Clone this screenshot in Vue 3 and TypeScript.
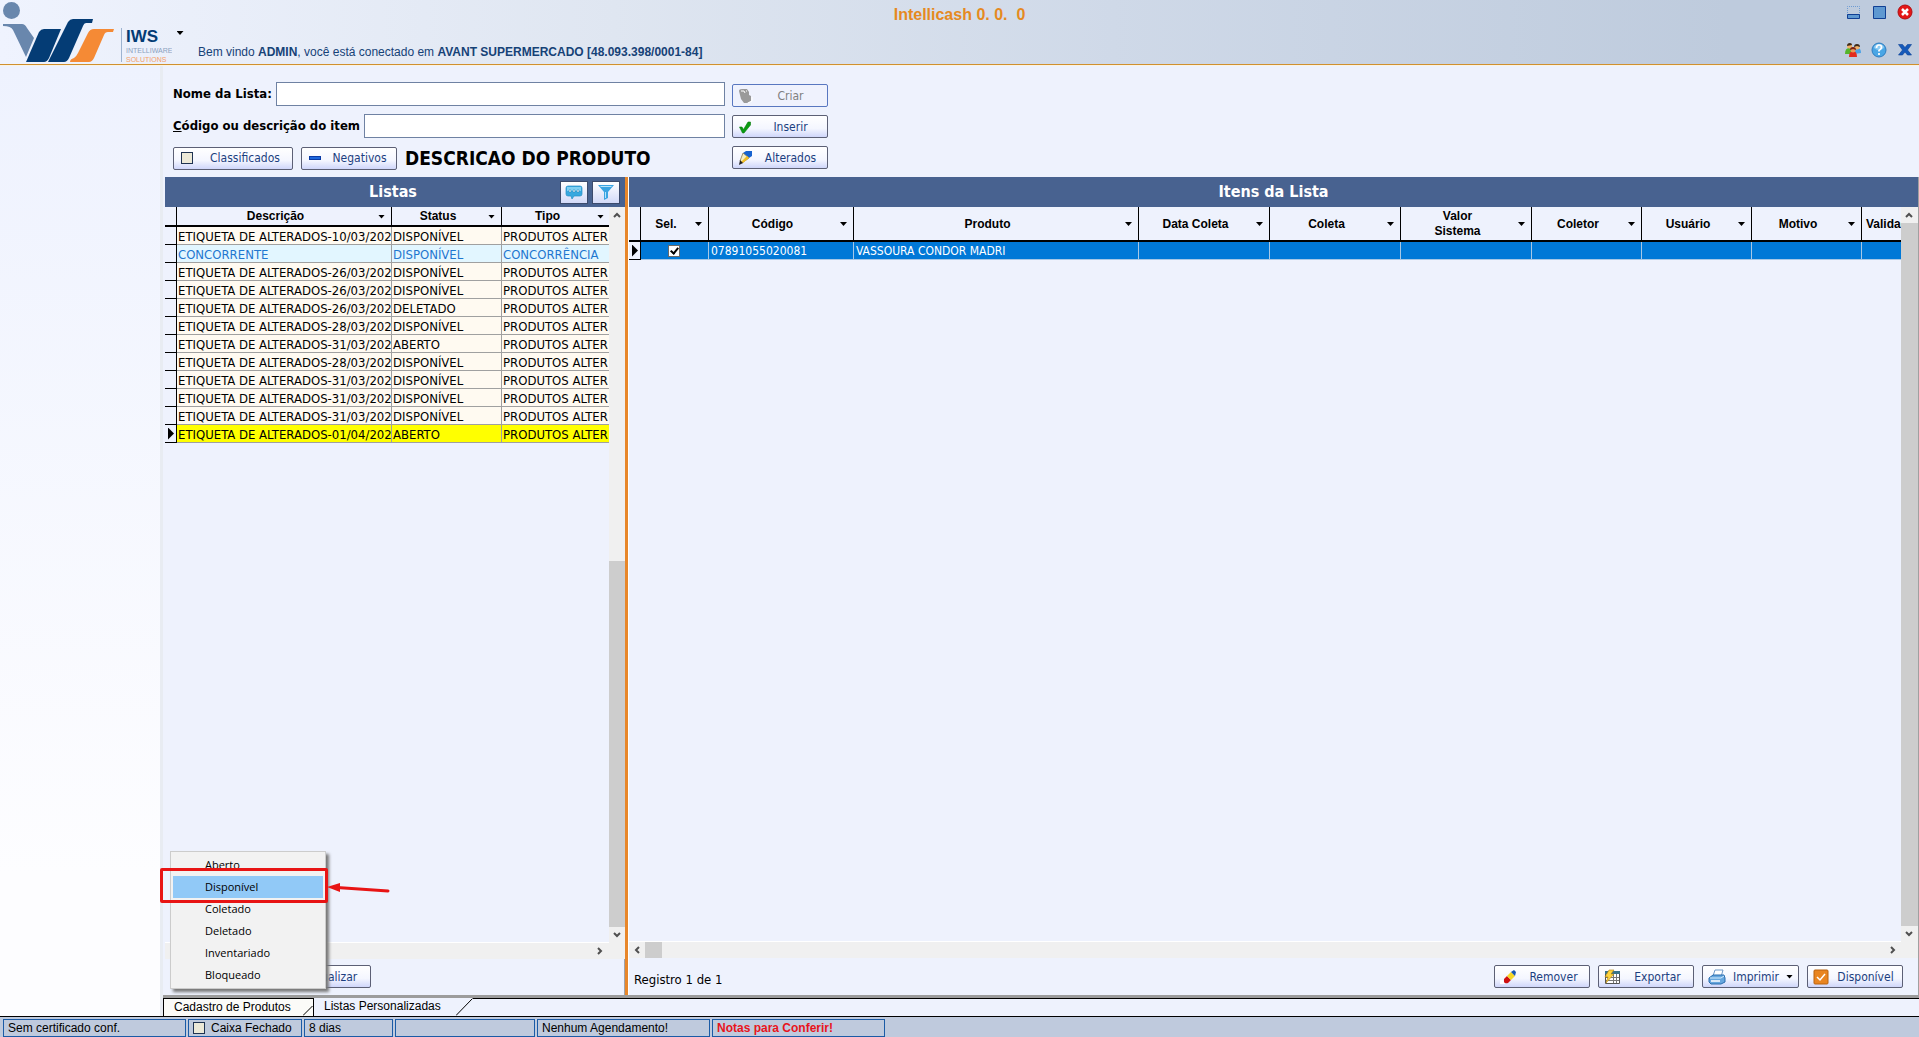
<script setup lang="ts">
import { ref } from 'vue'

interface ListRow {
  description: string
  status: string
  type: string
  tone?: 'rival' | 'current'
}

const altered = (date: string, status: string, tone?: ListRow['tone']): ListRow => ({
  description: `ETIQUETA DE ALTERADOS-${date}/202`,
  status,
  type: 'PRODUTOS ALTER',
  tone,
})

const lists: ListRow[] = [
  altered('10/03', 'DISPONÍVEL'),
  { description: 'CONCORRENTE', status: 'DISPONÍVEL', type: 'CONCORRÊNCIA', tone: 'rival' },
  altered('26/03', 'DISPONÍVEL'),
  altered('26/03', 'DISPONÍVEL'),
  altered('26/03', 'DELETADO'),
  altered('28/03', 'DISPONÍVEL'),
  altered('31/03', 'ABERTO'),
  altered('28/03', 'DISPONÍVEL'),
  altered('31/03', 'DISPONÍVEL'),
  altered('31/03', 'DISPONÍVEL'),
  altered('31/03', 'DISPONÍVEL'),
  altered('01/04', 'ABERTO', 'current'),
]

const itemColumns = [
  { label: 'Sel.', width: 68 },
  { label: 'Código', width: 145 },
  { label: 'Produto', width: 285 },
  { label: 'Data Coleta', width: 131 },
  { label: 'Coleta', width: 131 },
  { label: 'Valor Sistema', width: 131 },
  { label: 'Coletor', width: 110 },
  { label: 'Usuário', width: 110 },
  { label: 'Motivo', width: 110 },
  { label: 'Validade', width: 80 },
]

const statusOptions = ['Aberto', 'Disponível', 'Coletado', 'Deletado', 'Inventariado', 'Bloqueado']
const activeStatus = ref('Disponível')
const listName = ref('')
const itemQuery = ref('')
const selected = ref(true)
</script>

<template>
  <div class="app">
    <header class="topbar">
      <div class="brand">
        <svg class="logo" width="172" height="64" viewBox="0 0 172 64" role="img" aria-label="IWS Intelliware Solutions">
          <circle cx="11.500" cy="10.500" r="8.500" fill="#6987ad" />
          <path d="M3 24h19q3 0 5 4l7 10-8 19-13-27q-2-4-10-4z" fill="#6987ad" />
          <path d="M26 62 39 32q2-3 5-3h17L49 58q-2 4-5 4z" fill="#043c75" />
          <path d="M48 62 68 22q2-3 5-3h20l-1 4h-6q-2 0-3 3L69 58q-2 4-5 4z" fill="#043c75" />
          <path d="M70 62q0-3 4-4 2-1 4-5l10-20q2-4 6-4h20l-1 3h-5q-3 0-4 3L94 58q-2 4-5 4z" fill="#f58a35" />
          <path d="M121.500 28v34" stroke="#9db3d0" />
          <text x="126" y="42" font-size="17" font-weight="700" fill="#043c75">IWS</text>
          <text x="126" y="53" font-size="7" fill="#8ba1bf">INTELLIWARE</text>
          <text x="126" y="62" font-size="7" fill="#f3a06a">SOLUTIONS</text>
        </svg>
        <button class="plain logo-menu" type="button" aria-label="Menu"><span class="caret"></span></button>
        <p class="welcome">Bem vindo <b>ADMIN</b>, você está conectado em <b>AVANT SUPERMERCADO [48.093.398/0001-84]</b></p>
      </div>
      <h1>Intellicash 0. 0.&nbsp; 0</h1>
      <nav class="window-tools">
        <button class="plain" type="button" aria-label="Minimizar">
          <svg width="16" height="16" viewBox="0 0 16 16"><path d="M2.500 11V2.500h12V11" fill="none" stroke="#6d9bd3" stroke-dasharray="1 1" /><path d="M2.500 10.500h12v4h-12z" fill="#5e98d1" stroke="#103f94" /></svg>
        </button>
        <button class="plain" type="button" aria-label="Maximizar">
          <svg width="16" height="16" viewBox="0 0 16 16"><path d="M2.500 2.500h12v12h-12z" fill="#5e98d1" stroke="#103f94" /></svg>
        </button>
        <button class="plain" type="button" aria-label="Fechar">
          <svg width="16" height="16" viewBox="0 0 16 16"><circle cx="8" cy="8" r="7" fill="#e51616" stroke="#b00d10" /><path d="m5 5 6 6m0-6-6 6" stroke="#fff" stroke-width="2.500" /></svg>
        </button>
        <button class="plain" type="button" aria-label="Usuários">
          <svg width="18" height="16" viewBox="0 0 18 16"><path d="M1 12q0-6 4-6t4 6z" fill="#55b52b" /><path d="M10 12q0-6 3.500-6t3.500 5z" fill="#4ca2e5" /><circle cx="5.500" cy="4" r="2.500" fill="#f2b268" /><circle cx="13" cy="5" r="2.500" fill="#f2b268" /><path d="M3 4q0-3 3-3 2 0 2 2zM10 5q0-3 3-3 3 0 3 3l-3-1z" fill="#3c2a1b" /><path d="M5 15q0-6 4-6t4 6z" fill="#e22c1e" /><circle cx="9" cy="8" r="2.500" fill="#e99b58" /><path d="M6 8q0-3 3-3t3 3L9 7z" fill="#7b2011" /></svg>
        </button>
        <button class="plain" type="button" aria-label="Ajuda">
          <svg width="16" height="16" viewBox="0 0 16 16"><circle cx="8" cy="8" r="7" fill="#4aa6e5" stroke="#2e7dc0" /><ellipse cx="8" cy="5" rx="5" ry="3" fill="#8ccbf2" /><path d="M5.500 6q0-3 2.500-3t2.500 2.300Q10.500 7 8 8.500v1M8 11v2" fill="none" stroke="#fff" stroke-width="1.700" /></svg>
        </button>
        <button class="plain" type="button" aria-label="Sair">
          <svg width="16" height="16" viewBox="0 0 16 16"><path d="M1.500 2.500h4L8 5.500l2.500-3h4L10.500 8l4 5h-4L8 10l-2.500 3h-4l4-5z" fill="#1559ba" stroke="#0c4296" stroke-width=".6" /></svg>
        </button>
      </nav>
    </header>

    <div class="body">
      <aside class="sidebar"></aside>
      <main class="main">
        <form class="query" @submit.prevent>
          <div class="fields">
            <div class="row">
              <label for="list-name">Nome da Lista:</label>
              <input id="list-name" v-model="listName" type="text" />
            </div>
            <div class="row">
              <label for="item-query"><u>C</u>ódigo ou descrição do item</label>
              <input id="item-query" v-model="itemQuery" type="text" />
            </div>
            <div class="row buttons">
              <button class="btn wide" type="button"><i class="box"></i><span>Classificados</span></button>
              <button class="btn" type="button"><i class="dash"></i><span>Negativos</span></button>
              <strong class="product">DESCRICAO DO PRODUTO</strong>
            </div>
          </div>
          <div class="actions">
            <button class="btn" type="button" disabled>
              <svg width="16" height="16" viewBox="0 0 16 16"><path d="M1 3q0-2 3-2h5l2 3v3l2 1v5l-4 2H6L3 11z" fill="#9a9a9a" /><path d="M3 3h3l1 2M8 3h1" fill="none" stroke="#fff" /><path d="m10 15 4-2V9" fill="none" stroke="#fff" /></svg>
              <span>Criar</span>
            </button>
            <button class="btn" type="button">
              <svg width="16" height="16" viewBox="0 0 16 16"><path d="M1.500 8h2.500l1.500 2.500L10 3h2.500v3L6 14H4.500z" fill="#0a9b12" stroke="#087a0e" stroke-width=".6" /></svg>
              <span>Inserir</span>
            </button>
            <button class="btn" type="button">
              <svg width="16" height="16" viewBox="0 0 16 16"><path d="M5 3 8 1h6v5l-3 2z" fill="#1763d0" /><path d="m5 3 6 5-7 5-2-2z" fill="#f8efc0" stroke="#756a42" stroke-width=".7" /><path d="m9 6 2 2-6 5-2-1z" fill="#f0bd25" /><path d="m2 10 3 3-4 2z" fill="#222" /></svg>
              <span>Alterados</span>
            </button>
          </div>
        </form>

        <div class="panels">
          <section class="panel lists">
            <div class="title">
              <h2>Listas</h2>
              <button class="tool" type="button" aria-label="Comentários">
                <svg width="18" height="16" viewBox="0 0 18 16"><path d="M3 2h12q2 0 2 2v6q0 2-2 2H9l-2 3-1-3H3q-2 0-2-2V4q0-2 2-2z" fill="#38a8df" stroke="#278fc6" stroke-width=".7" /><path d="M2 3h14v4H2z" fill="#7fd0f3" /><path d="M4 6h2v2H4zm4 0h2v2H8zm4 0h2v2h-2z" fill="#fff" stroke="#2b7cae" stroke-width=".5" /></svg>
              </button>
              <button class="tool" type="button" aria-label="Filtrar">
                <svg width="18" height="16" viewBox="0 0 18 16"><path d="M1 1h16l-6 7v6l-4 2V8z" fill="#3aa4e2" /><path d="M3 2h12l-1 1H4zm5 6h1v6H8z" fill="#b6e3fa" /></svg>
              </button>
            </div>
            <div class="viewport">
              <div class="grid">
                <table class="list-table">
                  <colgroup><col class="mark" /><col class="c-desc" /><col class="c-status" /><col class="c-type" /></colgroup>
                  <thead>
                    <tr>
                      <th></th>
                      <th v-for="name in ['Descrição', 'Status', 'Tipo']" :key="name"><div class="head"><span>{{ name }}</span><i class="caret"></i></div></th>
                    </tr>
                  </thead>
                  <tbody>
                    <tr v-for="(row, i) in lists" :key="i" :class="row.tone">
                      <td class="marker"><i v-if="row.tone === 'current'" class="pointer"></i></td>
                      <td>{{ row.description }}</td>
                      <td>{{ row.status }}</td>
                      <td>{{ row.type }}</td>
                    </tr>
                  </tbody>
                </table>
              </div>
              <div class="vbar">
                <svg width="16" height="16" viewBox="0 0 16 16"><path d="m5 10 3-3 3 3" /></svg>
                <div class="track"><div class="gap"></div><div class="thumb"></div></div>
                <svg width="16" height="16" viewBox="0 0 16 16"><path d="m5 6 3 3 3-3" /></svg>
              </div>
            </div>
            <div class="hbar left-hbar">
              <svg width="16" height="16" viewBox="0 0 16 16"><path d="m6 5 3 3-3 3" /></svg>
            </div>
            <div class="foot">
              <div class="menu-anchor">
                <button class="btn" type="button">
                  <svg width="16" height="16" viewBox="0 0 16 16"><path d="M13 6a5 5 0 1 0 0 4M13 2v4H9" fill="none" stroke="#1b8a35" stroke-width="2" /></svg>
                  <span>Atualizar</span>
                </button>
                <ul class="menu" role="menu">
                  <li v-for="option in statusOptions" :key="option" role="none">
                    <button type="button" role="menuitem" :class="{ active: option === activeStatus }" @click="activeStatus = option">{{ option }}</button>
                  </li>
                </ul>
                <div class="callout"></div>
                <svg class="arrow" width="64" height="16" viewBox="0 0 64 16"><path d="M10 7.500 61 11" stroke="#e81414" stroke-width="3" stroke-linecap="round" /><path d="M0 7 13 3v9z" fill="#e81414" /></svg>
              </div>
            </div>
          </section>
          <div class="splitter"></div>
          <section class="panel items">
            <div class="title"><h2>Itens da Lista</h2></div>
            <div class="viewport">
              <div class="grid">
                <table class="item-table">
                  <colgroup><col class="mark" /><col v-for="c in itemColumns" :key="c.label" :style="{ width: c.width + 'px' }" /></colgroup>
                  <thead>
                    <tr>
                      <th></th>
                      <th v-for="c in itemColumns" :key="c.label"><div class="head" :class="{ narrow: c.label === 'Valor Sistema' }"><span>{{ c.label }}</span><i class="caret"></i></div></th>
                    </tr>
                  </thead>
                  <tbody>
                    <tr>
                      <td class="marker"><i class="pointer"></i></td>
                      <td class="check"><input v-model="selected" type="checkbox" aria-label="Selecionar VASSOURA CONDOR MADRI" /></td>
                      <td>07891055020081</td>
                      <td>VASSOURA CONDOR MADRI</td>
                      <td v-for="n in 7" :key="n"></td>
                    </tr>
                  </tbody>
                </table>
              </div>
              <div class="vbar">
                <svg width="16" height="16" viewBox="0 0 16 16"><path d="m5 10 3-3 3 3" /></svg>
                <div class="track"><div class="thumb"></div></div>
                <svg width="16" height="16" viewBox="0 0 16 16"><path d="m5 6 3 3 3-3" /></svg>
              </div>
            </div>
            <div class="hbar">
              <svg width="16" height="16" viewBox="0 0 16 16"><path d="m10 5-3 3 3 3" /></svg>
              <div class="thumb"></div>
              <svg class="end" width="16" height="16" viewBox="0 0 16 16"><path d="m6 5 3 3-3 3" /></svg>
            </div>
            <div class="foot item-foot">
              <p>Registro 1 de 1</p>
              <button class="btn" type="button">
                <svg width="18" height="16" viewBox="0 0 18 16"><path d="M0 11h3l2 4H0z" fill="#fff" /><path d="m4 10 3-3 4 4-3 3q-3 1-4-1z" fill="#cf1010" /><path d="m7 7 4-4 4 4-4 4z" fill="#f7d828" /><path d="m11 3 3-2 2 2-1 4z" fill="#1557b5" /></svg>
                <span>Remover</span>
              </button>
              <button class="btn" type="button">
                <svg width="18" height="16" viewBox="0 0 18 16"><path d="M1.500 2.500h14v12h-14z" fill="#fff" stroke="#555" /><path d="M1 2h15v3H1z" fill="#39738a" /><path d="M2 8.500h13M2 11.500h13M9.500 5v9M12.500 5v9" stroke="#777" /><path d="M5 1h5L7 5h3l-8 9 2-6H1z" fill="#ffd43b" stroke="#a97d10" stroke-width=".6" /></svg>
                <span>Exportar</span>
              </button>
              <button class="btn tight" type="button">
                <svg width="18" height="16" viewBox="0 0 18 16"><path d="m5 7 2-6h8l-2 7z" fill="#fff" stroke="#6e98c7" /><path d="m1 9 4-3h11l1 3v4l-4 2H3l-2-2z" fill="#67a7de" stroke="#286cae" /><path d="M2 9h11l3-2" fill="none" stroke="#d5edff" /><path d="M3 12h9" stroke="#fff" stroke-width="1.500" /></svg>
                <span>Imprimir</span><i class="caret"></i>
              </button>
              <button class="btn" type="button">
                <svg width="16" height="16" viewBox="0 0 16 16"><rect x="1" y="1" width="14" height="14" rx="1" fill="#e98520" stroke="#b9620f" /><path d="m4 8 3 3 5-6" fill="none" stroke="#fff" stroke-width="1.500" /></svg>
                <span>Disponível</span>
              </button>
            </div>
          </section>
        </div>

        <nav class="tabs">
          <a class="tab inactive" href="#produtos">Cadastro de Produtos<svg width="10" height="17" viewBox="0 0 10 17"><path d="M0 16.500 9.500 7" fill="none" stroke="#000" /></svg></a>
          <a class="tab active-tab" href="#listas">Listas Personalizadas<svg width="17" height="18" viewBox="0 0 17 18"><path d="M0 17.500 16.500 .5" stroke="#000" /></svg></a>
          <div class="rest"></div>
        </nav>
      </main>
    </div>

    <footer class="statusbar">
      <span class="s-cert">Sem certificado conf.</span>
      <span class="s-cash"><i class="box"></i>Caixa Fechado</span>
      <span class="s-days">8 dias</span>
      <span class="s-blank"></span>
      <span class="s-note">Nenhum Agendamento!</span>
      <span class="s-note alert">Notas para Conferir!</span>
    </footer>
  </div>
</template>

<style>
body { margin: 0; }
</style>

<style scoped>
* { box-sizing: border-box; }
.app {
  --ui: "DejaVu Sans Condensed", "DejaVu Sans", sans-serif;
  --arial: "Liberation Sans", Arial, sans-serif;
  display: flex; flex-direction: column; height: 100vh; overflow: hidden;
  font: 12px/16px var(--ui); color: #000; background: #eef2fd;
}
h1, h2, p, ul { margin: 0; padding: 0; list-style: none; }
button { font: inherit; color: inherit; }
svg { flex: none; display: block; }
.plain { display: flex; align-items: center; justify-content: center; padding: 0; border: 0; background: none; }
.caret { flex: none; width: 7px; height: 4px; background: #000; clip-path: polygon(0 0, 100% 0, 50% 100%); }

.topbar {
  flex: none; display: grid; grid-template-columns: 1fr auto 1fr; height: 66px;
  border-bottom: 1px solid #faf3e3; box-shadow: inset 0 -1px #d0902f;
  background: linear-gradient(90deg, #eff3fe 0, #dfe6f1 32%, #cfd9e8 58%, #becbdd 90%);
  font-family: var(--arial);
}
.brand { display: flex; min-width: 0; }
.logo { font-family: "Liberation Sans Narrow", var(--arial); }
.logo-menu { width: 16px; height: 66px; }
.welcome { align-self: flex-end; padding: 0 0 6px 10px; color: #164277; white-space: nowrap; }
h1 { padding-top: 5px; font-size: 16px; line-height: 20px; color: #e58a1f; white-space: nowrap; }
.window-tools { justify-self: end; display: grid; grid-template-columns: repeat(3, 18px); gap: 0 8px; padding: 4px 5px 8px 0; align-content: space-between; }

.body { flex: 1; display: flex; min-height: 0; }
.sidebar { flex: 0 0 163px; border-right: 3px solid #e8ecf2; background: linear-gradient(#eef2fe, #fdfdff 85%); }
.main { flex: 1; min-width: 0; display: flex; flex-direction: column; }
.query { flex: none; display: flex; gap: 7px; padding: 16px 0 7px 10px; }
.fields { display: flex; flex-direction: column; gap: 8px; width: 552px; }
.row { display: flex; align-items: center; gap: 4px; height: 24px; }
.row.buttons { gap: 8px; }
.row label { font-size: 13px; font-weight: 700; white-space: nowrap; }
.row input { flex: 1; min-width: 0; height: 24px; border: 1px solid #6f82a3; background: #fff; font: inherit; }
.product { font-size: 19px; line-height: 24px; white-space: nowrap; }
.actions { display: flex; flex-direction: column; gap: 8px; padding-top: 2px; }
.btn {
  flex: none; display: flex; align-items: center; width: 96px; height: 23px; padding: 0 5px;
  border: 1px solid #5c6075; border-radius: 2px; color: #1c3f80; white-space: nowrap;
  background: linear-gradient(#fff, #f4f6ff 60%, #cfd6fa);
}
.btn span { flex: 1; padding-left: 5px; text-align: center; }
.btn:disabled { border-color: #5877c0; background: #eff2fd; color: #808080; }
.btn.wide { width: 120px; }
.btn.wide span { padding-left: 8px; }
.btn.tight { width: 97px; }
.btn.tight span { padding-left: 0; }
.box { flex: none; width: 12px; height: 12px; margin: 0 2px; border: 1px solid #1f3352; background: #ece9d8; }
.dash { width: 12px; height: 4px; margin: 0 2px; border: 1px solid #0a3ba5; background: #1c66dc; }

.panels { flex: 1; display: flex; min-height: 0; padding-left: 2px; border-bottom: 3px solid #9c9c9c; }
.panel { display: flex; flex-direction: column; min-width: 0; }
.lists { flex: 0 0 460px; }
.items { flex: 1; border-right: 1px solid #a0a0a0; }
.splitter { flex: 0 0 4px; border-right: 1px solid #fff; background: #e8872a; }
.title { flex: none; display: flex; align-items: center; gap: 4px; height: 30px; background: #486290; color: #fff; }
.title h2 { flex: 1; font-size: 16px; line-height: 20px; text-align: center; }
.lists .title { padding: 0 5px 0 65px; }
.tool { display: flex; align-items: center; justify-content: center; width: 28px; height: 23px; padding: 0; border: 1px solid #3c4b6c; background: linear-gradient(#fff, #d3daf8); }
.viewport { flex: 1; display: flex; min-height: 0; }
.grid { flex: 1; min-width: 0; overflow: hidden; border-bottom: 1px solid #fff; }
table { table-layout: fixed; border-collapse: separate; border-spacing: 0; }
.list-table { width: 480px; font-size: 13px; }
.item-table { width: 1313px; }
.mark { width: 12px; }
.c-desc { width: 215px; }
.c-status { width: 110px; }
.c-type { width: 143px; }
th { height: 20px; padding: 1px 0 0; border-right: 1px solid #000; border-bottom: 2px solid #000; font: 700 12px/15px var(--arial); }
.item-table th { height: 35px; }
.head { display: flex; align-items: center; padding-right: 6px; }
.head span { flex: 1; padding-right: 4px; text-align: center; }
.list-table th:nth-child(4) .head { padding-right: 40px; }
.item-table th:last-child .head span { text-align: left; padding-left: 4px; }
.head.narrow span { padding: 0 36px 0 32px; }
td { height: 18px; padding: 2px 0 0 2px; border-right: 1px solid #a0a0a0; border-bottom: 1px solid #a0a0a0; line-height: 15px; white-space: nowrap; overflow: hidden; background: #fffaf1; }
.list-table td { padding-left: 1px; }
.list-table td.marker, .item-table td.marker { padding: 0; border-color: #000; background: #eef2fd; }
.pointer { display: block; width: 6px; height: 12px; margin-left: 3px; background: #000; clip-path: polygon(0 0, 100% 50%, 0 100%); }
.rival td:not(.marker) { background: #e2f6ff; color: #1f77cf; }
.current td:not(.marker) { background: #ff0; }
.item-table td:not(.marker) { background: #0078d7; color: #fff; border-color: #a7c7e6; }
.item-table td.check { padding: 0; }
.check input { appearance: none; display: block; position: relative; width: 12px; height: 12px; margin: 0 0 0 27px; border: 1px solid #696969; background: #fff; }
.check input:checked::after { content: ""; position: absolute; left: 3px; top: 0; width: 3px; height: 6px; border: solid #000; border-width: 0 2px 2px 0; transform: rotate(40deg); }

.vbar { flex: 0 0 16px; display: flex; flex-direction: column; background: #f0f0f0; }
.items .vbar { flex-basis: 17px; }
.vbar path, .hbar path { fill: none; stroke: #505050; stroke-width: 2; }
.track { flex: 1; display: flex; flex-direction: column; }
.gap { flex: 48; }
.track .thumb { flex: 52; }
.thumb { background: #cdcdcd; }
.hbar { flex: none; display: flex; height: 16px; background: #f0f0f0; }
.hbar .thumb { width: 17px; }
.hbar .end { margin-left: auto; margin-right: 17px; }
.left-hbar { justify-content: flex-end; padding-right: 17px; }
.foot { flex: none; display: flex; height: 36px; padding: 6px 16px 0 110px; border-right: 1px solid #9fa3ab; }
.item-foot { gap: 8px; height: 37px; padding: 7px 15px 0 5px; border: 0; }
.item-foot p { flex: 1; padding-top: 7px; font-size: 13px; }

.menu-anchor { position: relative; }
.menu { position: absolute; left: -105px; bottom: 6px; width: 156px; padding: 2px; border: 1px solid #ccc; background: #f2f2f2; box-shadow: 3px 3px 3px #777; font: 11px/22px "Open Sans", "Noto Sans", sans-serif; }
.menu button { display: block; width: 100%; height: 22px; padding: 0 0 0 32px; border: 0; background: none; text-align: left; }
.menu .active { background: #91c9f7; }
.callout { position: absolute; left: -115px; bottom: 92px; width: 168px; height: 35px; border: 3px solid #e81414; border-radius: 2px; }
.arrow { position: absolute; left: 52px; bottom: 99px; }

.tabs { flex: none; display: flex; height: 18px; font: 12px/17px var(--arial); }
.tab { display: flex; padding-left: 10px; color: #000; text-decoration: none; white-space: nowrap; }
.tab svg { margin-left: auto; }
.inactive { width: 151px; border: 1px solid #000; border-bottom: 0; background: #fbfbf8; }
.active-tab { width: 159px; }
.rest { flex: 1; border-top: 1px solid #000; }
.statusbar { flex: none; display: flex; gap: 2px; height: 21px; padding: 2px 0 0 3px; border-top: 1px solid #000; background: #bfcadd; font: 12px/16px var(--arial); }
.statusbar span { display: flex; align-items: center; padding-left: 4px; border: 1px solid #1b5ba6; white-space: nowrap; }
.statusbar .box { margin: 0 6px 0 0; }
.s-cert { width: 183px; }
.s-cash { width: 114px; }
.s-days { width: 89px; }
.s-blank { width: 140px; }
.s-note { width: 173px; }
.alert { color: #e8141c; font-weight: 700; }
</style>
